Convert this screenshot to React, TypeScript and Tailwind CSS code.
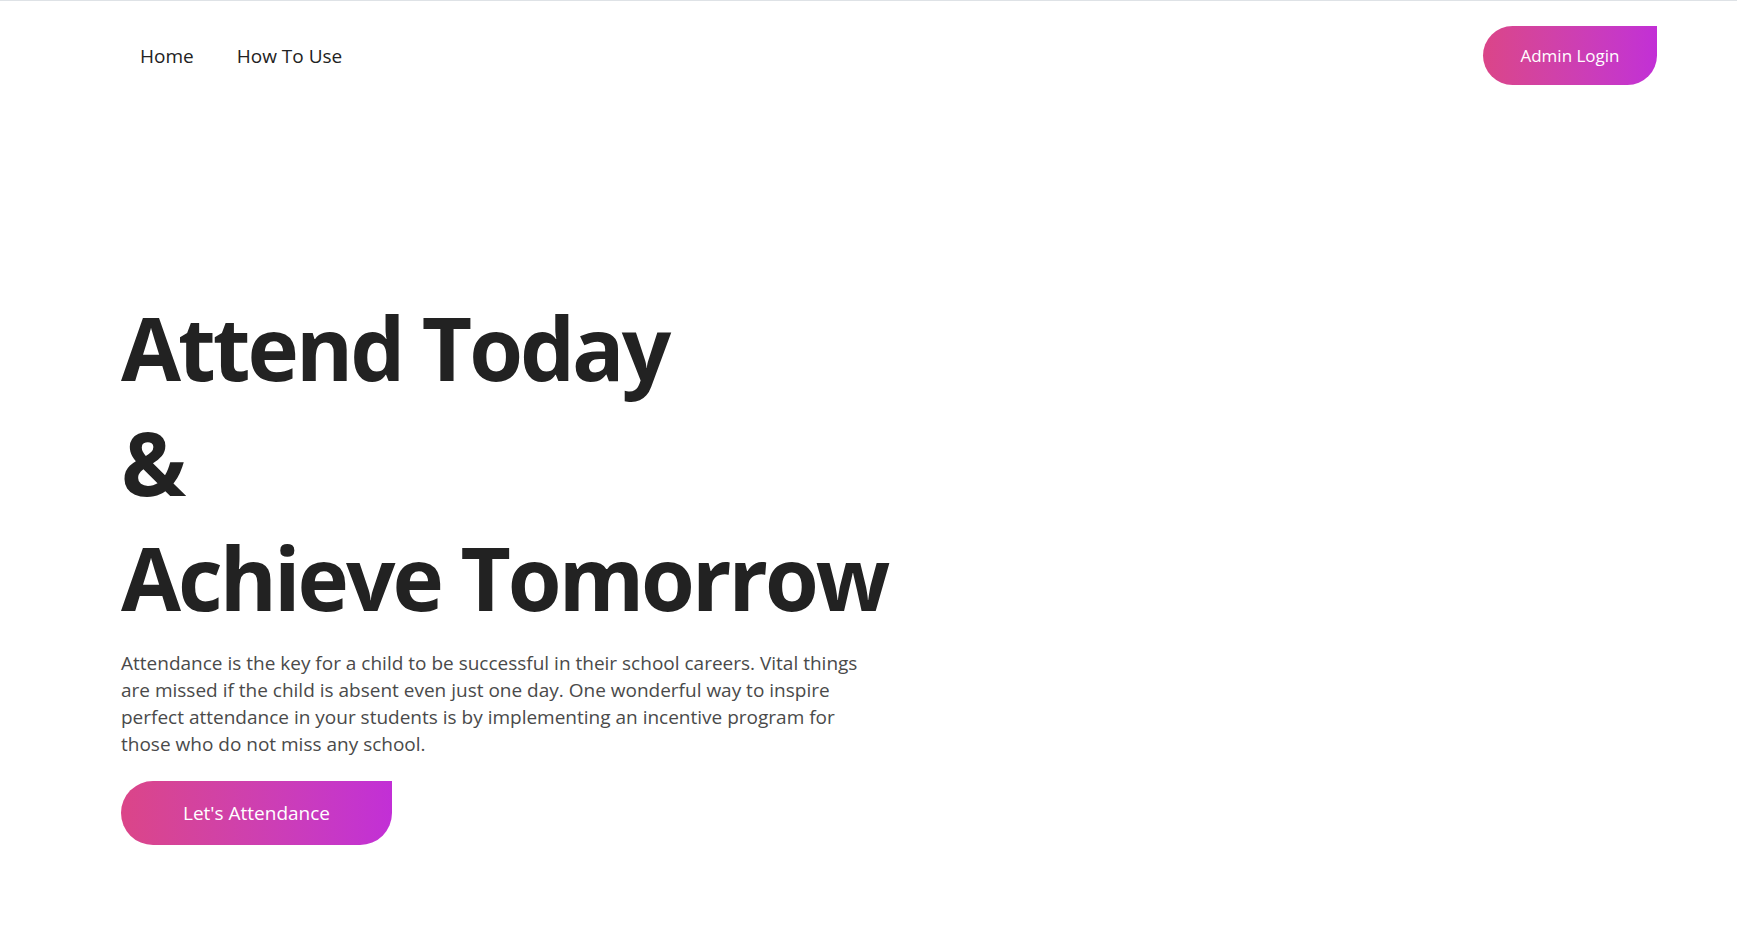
export default function App() {
  return (
    <div
      className="min-h-screen bg-white border-t border-[#dee2e6] text-[#212529]"
      style={{ fontFamily: '"Open Sans", "Noto Sans", sans-serif' }}
    >
      {/* Navbar */}
      <nav className="flex items-center justify-between pl-[140px] pr-[80px] pt-[25px]">
        <div className="flex items-center gap-[43px] pt-[2px] text-[19px] text-[#222]">
          <a href="#">Home</a>
          <a href="#">How To Use</a>
        </div>
        <a
          href="#"
          className="flex items-center justify-center w-[174px] h-[59px] rounded-l-full rounded-br-full bg-gradient-to-r from-[#db4588] to-[#c22fd6] text-white text-[17px]"
        >
          Admin Login
        </a>
      </nav>

      {/* Hero */}
      <section className="pl-[121px] pt-[205px]">
        <h1 className="text-[87px] font-bold leading-[115px] tracking-[-3px] text-[#222]">
          Attend Today
          <br />&amp;
          <br />
          Achieve Tomorrow
        </h1>
        <p className="mt-[15px] text-[19px] leading-[27px] text-[#4a4a4a]">
          Attendance is the key for a child to be successful in their school careers. Vital things
          <br />
          are missed if the child is absent even just one day. One wonderful way to inspire
          <br />
          perfect attendance in your students is by implementing an incentive program for
          <br />
          those who do not miss any school.
        </p>
        <a
          href="#"
          className="mt-[23px] flex items-center justify-center w-[271px] h-[64px] rounded-tl-full rounded-b-full bg-gradient-to-r from-[#db4588] to-[#c22fd6] text-white text-[19px]"
        >
          Let's Attendance
        </a>
      </section>
    </div>
  );
}
